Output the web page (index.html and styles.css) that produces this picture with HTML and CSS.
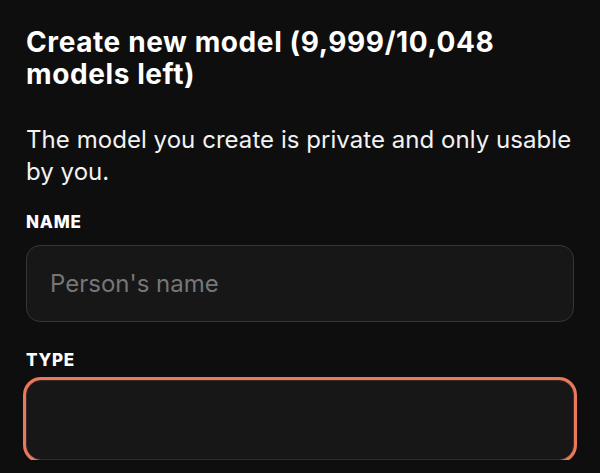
FILE: index.html
```html
<!DOCTYPE html>
<html lang="en">
<head>
<meta charset="utf-8">
<title>Create new model</title>
<link rel="stylesheet" href="styles.css">
</head>
<body>
<main class="panel">
  <h1 class="title">Create new model (9,999/10,048 models left)</h1>
  <p class="lead">The model you create is private and only usable by you.</p>
  <form class="form">
    <div class="field">
      <label class="label" for="name">NAME</label>
      <input class="input" id="name" type="text" placeholder="Person's name">
    </div>
    <div class="field field-focus">
      <label class="label" for="type">TYPE</label>
      <input class="input input-focus" id="type" type="text">
    </div>
  </form>
</main>
</body>
</html>
```
FILE: styles.css
```css
html, body {
  margin: 0;
  padding: 0;
  background: #0e0e0e;
  color: #ffffff;
  font-family: Inter, "Noto Sans", "Liberation Sans", sans-serif;
}

.panel {
  padding: 26px 26px 0 26px;
}

.title {
  margin: 0;
  max-width: 500px;
  font-size: 28px;
  font-weight: 700;
  line-height: 32px;
  letter-spacing: 0.6px;
}

.lead {
  margin: 34px 0 0 0;
  font-size: 24px;
  font-weight: 400;
  line-height: 32px;
  letter-spacing: 0.05px;
  color: #f2f2f2;
}

.form {
  display: flex;
  flex-direction: column;
  gap: 28px;
  margin-top: 24px;
}

.field {
  display: flex;
  flex-direction: column;
  gap: 13px;
}

.field-focus {
  gap: 10px;
}

.label {
  font-size: 17px;
  font-weight: 800;
  line-height: 20px;
  letter-spacing: 0.8px;
  color: #ffffff;
}

.input {
  box-sizing: border-box;
  width: 100%;
  height: 77px;
  padding: 0 23px;
  border: 1px solid #363636;
  border-radius: 14px;
  background: #171717;
  color: #ffffff;
  font-family: Inter, "Noto Sans", "Liberation Sans", sans-serif;
  font-size: 24px;
  outline: none;
}

.input::placeholder {
  color: #767676;
}

.input-focus {
  height: 80px;
  border-color: #3a2a26;
  border-radius: 15px;
  box-shadow: 0 0 0 3px #e9785c;
}
```
